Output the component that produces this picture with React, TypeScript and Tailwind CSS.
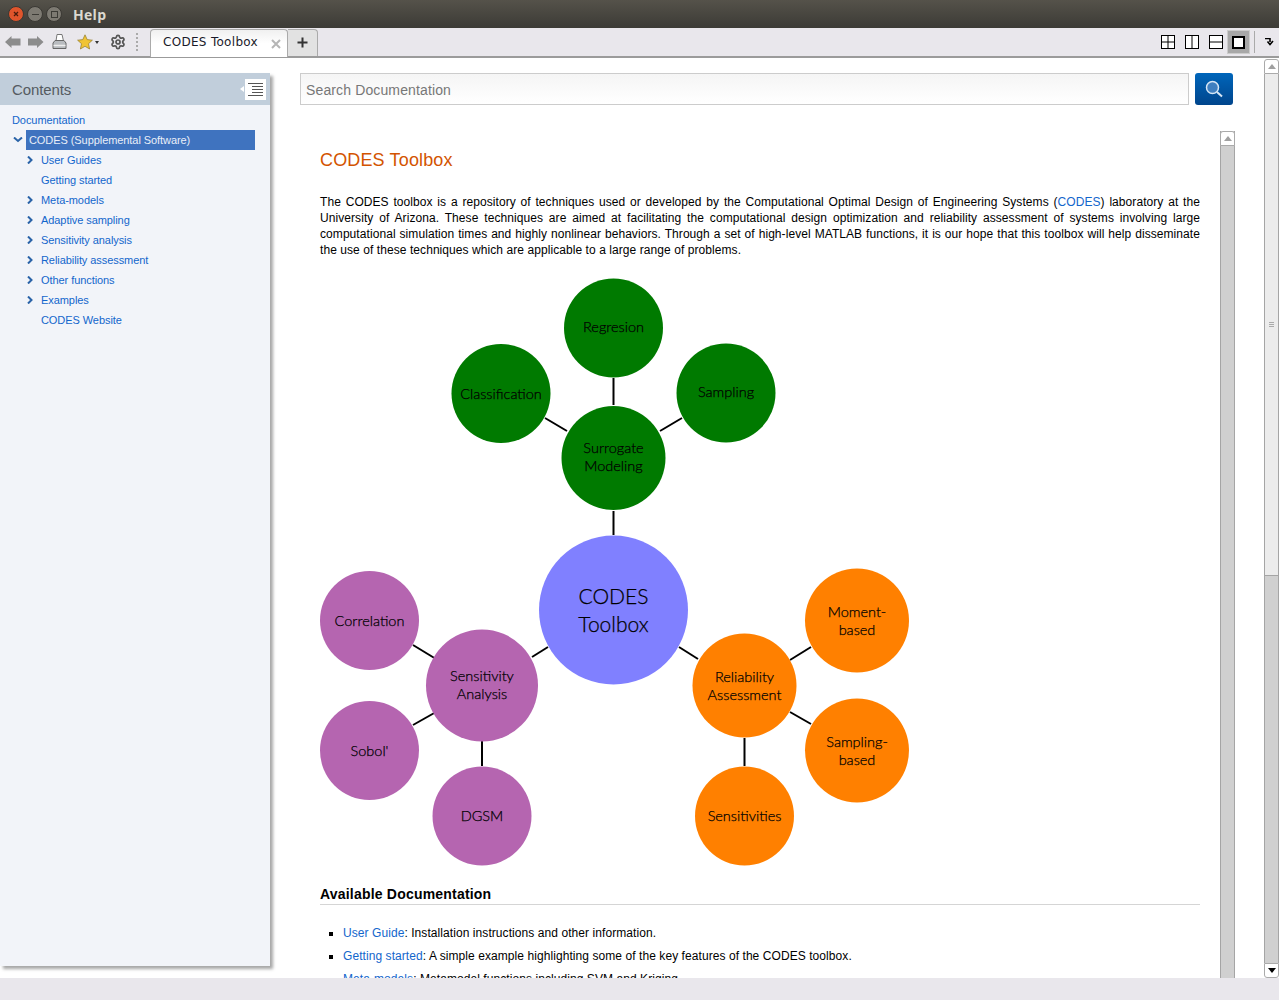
import { Settings } from "lucide-react";

const treeItems = [
  { label: "User Guides", arrow: true },
  { label: "Getting started", arrow: false },
  { label: "Meta-models", arrow: true },
  { label: "Adaptive sampling", arrow: true },
  { label: "Sensitivity analysis", arrow: true },
  { label: "Reliability assessment", arrow: true },
  { label: "Other functions", arrow: true },
  { label: "Examples", arrow: true },
  { label: "CODES Website", arrow: false },
];

const lines = [
  [613.5, 378, 613.5, 405],
  [545, 418, 567, 431],
  [660, 431, 682, 418],
  [613.5, 511, 613.5, 535],
  [532, 657, 548, 647],
  [679, 647, 698, 659],
  [413, 645, 436, 659],
  [413, 725, 436, 712],
  [482, 741, 482, 766],
  [790, 660, 811, 647],
  [790, 712, 811, 724],
  [744.5, 738, 744.5, 766],
];

const GREEN = "#007a00";
const PURPLE = "#b565b0";
const ORANGE = "#ff8000";

const nodes = [
  { x: 613.5, y: 328, r: 49.5, fill: GREEN, text: ["Regresion"], dy: -1 },
  { x: 501, y: 393.5, r: 49.5, fill: GREEN, text: ["Classification"], dy: 0 },
  { x: 726, y: 393, r: 49.5, fill: GREEN, text: ["Sampling"], dy: -1 },
  { x: 613.5, y: 458, r: 52, fill: GREEN, text: ["Surrogate", "Modeling"], dy: 0 },
  { x: 369.5, y: 620.5, r: 49.5, fill: PURPLE, text: ["Correlation"], dy: 0 },
  { x: 482, y: 685.5, r: 56, fill: PURPLE, text: ["Sensitivity", "Analysis"], dy: 0 },
  { x: 369.5, y: 750.5, r: 49.5, fill: PURPLE, text: ["Sobol'"], dy: 0 },
  { x: 482, y: 816, r: 49.5, fill: PURPLE, text: ["DGSM"], dy: 0 },
  { x: 744.5, y: 685.5, r: 52, fill: ORANGE, text: ["Reliability", "Assessment"], dy: 1 },
  { x: 857, y: 620.5, r: 52, fill: ORANGE, text: ["Moment-", "based"], dy: 1 },
  { x: 857, y: 750.5, r: 52, fill: ORANGE, text: ["Sampling-", "based"], dy: 1 },
  { x: 744.5, y: 816, r: 49.5, fill: ORANGE, text: ["Sensitivities"], dy: 0 },
];

function WindowButton({ color, children }: { color: string; children: React.ReactNode }) {
  return (
    <div className={`w-[16px] h-[16px] rounded-full border border-[#3a3833] flex items-center justify-center ${color}`}>
      {children}
    </div>
  );
}

function LayoutIcon({ children }: { children: React.ReactNode }) {
  return (
    <svg width="14" height="14" viewBox="0 0 14 14" fill="none" stroke="#000" strokeWidth="1" className="shrink-0">
      <rect x="0.5" y="0.5" width="13" height="13" fill="#fff" />
      {children}
    </svg>
  );
}

function Diagram() {
  return (
    <svg width="600" height="590" viewBox="320 278 600 590" className="block mt-[20px]" fontFamily="Lato, 'Open Sans', sans-serif" fontWeight="300">
      {lines.map((l, i) => (
        <line key={i} x1={l[0]} y1={l[1]} x2={l[2]} y2={l[3]} stroke="#000" strokeWidth="2" />
      ))}
      <circle cx="613.5" cy="610" r="74.5" fill="#8080ff" />
      <g fill="#000" stroke="#000" strokeWidth="0.25" textAnchor="middle" fontSize="21">
        <text x="613.5" y="604">CODES</text>
        <text x="613.5" y="632">Toolbox</text>
      </g>
      {nodes.map((n) => (
        <g key={n.x + "-" + n.y}>
          <circle cx={n.x} cy={n.y} r={n.r} fill={n.fill} />
          <g fill="#000" stroke="#000" strokeWidth="0.25" textAnchor="middle" fontSize="14.5">
            {n.text.length === 1 ? (
              <text x={n.x} y={n.y + 5 + n.dy}>{n.text[0]}</text>
            ) : (
              <>
                <text x={n.x} y={n.y - 5 + n.dy}>{n.text[0]}</text>
                <text x={n.x} y={n.y + 13 + n.dy}>{n.text[1]}</text>
              </>
            )}
          </g>
        </g>
      ))}
    </svg>
  );
}

function Sidebar() {
  return (
    <div className="w-[270px] h-[893px] mt-[15px] shrink-0 bg-[#f2f4f9] shadow-[3px_3px_3px_rgba(0,0,0,0.35)]">
      <div className="h-[32px] bg-[#c1cedb] flex items-center justify-between pl-[12px] pr-[4px]">
        <span className="text-[15px] tracking-[-0.1px] text-[#555b61] pt-[2px]">Contents</span>
        <div className="flex items-center gap-[1px]">
          <div className="w-0 h-0 border-y-[3px] border-y-transparent border-r-[4px] border-r-white" />
          <div className="w-[21px] h-[21px] bg-white flex flex-col items-end justify-center gap-[2px] pr-[3px]">
            <div className="w-[15px] h-[1px] bg-[#555]" />
            <div className="w-[11px] h-[1px] bg-[#555]" />
            <div className="w-[11px] h-[1px] bg-[#555]" />
            <div className="w-[11px] h-[1px] bg-[#555]" />
            <div className="w-[15px] h-[1px] bg-[#555]" />
          </div>
        </div>
      </div>
      <div className="pt-[5px] text-[11px] tracking-[-0.07px] leading-[20px] text-[#1366cc]">
        <div className="h-[20px] pl-[12px]">Documentation</div>
        <div className="h-[20px] flex items-center pl-[13px] pr-[15px]">
          <svg width="10" height="6" viewBox="0 0 10 6" className="mr-[3px]">
            <path d="M1 0.5 L5 4 L9 0.5" fill="none" stroke="#2a63a8" strokeWidth="2" />
          </svg>
          <div className="flex-1 h-[20px] bg-[#3f73bf] text-[#e8eef8] pl-[3px]">CODES (Supplemental Software)</div>
        </div>
        {treeItems.map((item) => (
          <div key={item.label} className="h-[20px] flex items-center pl-[27px]">
            <div className="w-[14px] shrink-0">
              {item.arrow && (
                <svg width="6" height="8" viewBox="0 0 6 8">
                  <path d="M1 0.5 L4.5 4 L1 7.5" fill="none" stroke="#2a63a8" strokeWidth="2" />
                </svg>
              )}
            </div>
            <span>{item.label}</span>
          </div>
        ))}
      </div>
    </div>
  );
}

export default function App() {
  return (
    <div className="w-[1279px] h-[1000px] flex flex-col overflow-hidden bg-white font-['Liberation_Sans',sans-serif]">
      {/* title bar */}
      <div className="h-[28px] shrink-0 bg-gradient-to-b from-[#55524a] to-[#3c3b36] flex items-center pl-[8px]">
        <div className="flex items-center gap-[3px]">
          <WindowButton color="bg-[#e0552c]">
            <svg width="8" height="8" viewBox="0 0 8 8"><path d="M2 2 L6 6 M6 2 L2 6" stroke="#4a1c0c" strokeWidth="1.3" /></svg>
          </WindowButton>
          <WindowButton color="bg-[#7d7a72]">
            <div className="w-[7px] h-[1px] bg-[#3c3b36]" />
          </WindowButton>
          <WindowButton color="bg-[#7d7a72]">
            <div className="w-[7px] h-[7px] border border-[#3c3b36]" />
          </WindowButton>
        </div>
        <span className="ml-[11px] text-[14px] font-bold text-[#dcd9d0] font-['Open_Sans',sans-serif] tracking-[0.3px]">Help</span>
      </div>

      {/* toolbar */}
      <div className="h-[30px] shrink-0 bg-[#e9e7ec] border-b-2 border-b-[#9b9b9b] flex items-end">
        <div className="h-[28px] w-[150px] shrink-0 flex items-center pl-[5px]">
          <svg width="16" height="14" viewBox="0 0 16 14" className="mr-[7px]">
            <path d="M0 7 L6.5 1 V3.5 H15.5 V10.5 H6.5 V13 Z" fill="#8c8c8c" />
          </svg>
          <svg width="16" height="14" viewBox="0 0 16 14" className="mr-[8px]">
            <path d="M15.5 7 L9 1 V3.5 H0 V10.5 H9 V13 Z" fill="#8c8c8c" />
          </svg>
          <svg width="15" height="16" viewBox="0 0 15 16" className="mr-[10px]">
            <path d="M5 0.5 H10 L11.5 7 H4 Z" fill="#fff" stroke="#777" strokeWidth="1" />
            <path d="M1 9 L3 6.5 H12 L14 9 V14.5 H1 Z" fill="#b9bcc0" stroke="#666" strokeWidth="1" />
            <path d="M1.5 11.5 H13.5" stroke="#eee" strokeWidth="1.5" />
          </svg>
          <svg width="16" height="16" viewBox="0 0 16 16">
            <path d="M8 0.8 L10.2 5.6 L15.4 6.2 L11.5 9.7 L12.6 15 L8 12.3 L3.4 15 L4.5 9.7 L0.6 6.2 L5.8 5.6 Z" fill="#f0c435" stroke="#8f7a2c" strokeWidth="0.7" />
          </svg>
          <div className="w-0 h-0 ml-[2px] mr-[11px] border-x-[2.5px] border-x-transparent border-t-[3px] border-t-[#333]" />
          <Settings size={16} strokeWidth={2.6} color="#555" className="mr-[10px]" />
          <div className="h-[18px] border-l-2 border-dotted border-l-[#aaa]" />
        </div>
        <div className="w-[138px] h-[28px] mb-[-1px] bg-gradient-to-b from-[#f0f0f0] via-white to-white border border-b-0 border-[#aaa] rounded-t-[4px] flex items-center pl-[12px] pr-[6px] justify-between relative">
          <span className="text-[12px] tracking-[0.3px] mb-[4px] font-['DejaVu_Sans',sans-serif] text-[#1a1a2a]">CODES Toolbox</span>
          <svg width="10" height="10" viewBox="0 0 10 10">
            <path d="M1 1 L9 9 M9 1 L1 9" stroke="#b5b5b5" strokeWidth="2" />
          </svg>
        </div>
        <div className="w-[30px] h-[27px] bg-[#e2e2e2] border border-b-0 border-l-0 border-[#aaa] rounded-tr-[4px] flex items-center justify-center pb-[2px]">
          <svg width="11" height="11" viewBox="0 0 11 11"><path d="M5.5 0.5 V10.5 M0.5 5.5 H10.5" stroke="#333" strokeWidth="2" /></svg>
        </div>
        <div className="flex-1 h-[28px] flex items-center justify-end">
          <LayoutIcon><path d="M7 0.5 V13.5 M0.5 7 H13.5" /></LayoutIcon>
          <div className="w-[10px]" />
          <LayoutIcon><path d="M7 0.5 V13.5" /></LayoutIcon>
          <div className="w-[10px]" />
          <LayoutIcon><path d="M0.5 7 H13.5" /></LayoutIcon>
          <div className="w-[23px] h-[24px] ml-[4px] bg-[#a8a8a8] border border-[#ccc] flex items-center justify-center">
            <div className="w-[13px] h-[13px] bg-white border-2 border-black" />
          </div>
          <div className="h-[22px] ml-[4px] border-l border-l-[#aaa]" />
          <svg width="9" height="8" viewBox="0 0 9 8" className="ml-[10px] mr-[5px]">
            <path d="M0 0.5 H5 V4 M2.5 3.5 L5 6.5 L8 3" fill="none" stroke="#000" strokeWidth="1.6" />
          </svg>
        </div>
      </div>

      {/* body */}
      <div className="h-[920px] shrink-0 flex">
        <Sidebar />
        <div className="flex-1 min-w-0 flex flex-col pl-[30px] pt-[15px]">
          <div className="flex gap-[6px] h-[32px] shrink-0">
            <div className="w-[889px] h-[32px] border border-[#ccc] bg-gradient-to-b from-[#f5f5f5] to-white flex items-center pl-[5px] pt-[2px] text-[14px] tracking-[0.13px] text-[#777]">
              Search Documentation
            </div>
            <div className="w-[38px] h-[32px] rounded-[3px] bg-gradient-to-b from-[#0066bb] to-[#00458c] flex items-center justify-center">
              <svg width="18" height="18" viewBox="0 0 18 18">
                <circle cx="7.5" cy="7.5" r="6" fill="#3f7fc0" stroke="#d6e6f5" strokeWidth="1.5" />
                <path d="M12 12 L17 16.5" stroke="#d6e6f5" strokeWidth="2" />
              </svg>
            </div>
          </div>
          <div className="mt-[26px] flex-1 min-h-0 flex">
            <div className="w-[920px] shrink-0 pl-[20px] pt-[19px] overflow-hidden">
              <div className="w-[880px]">
                <h1 className="text-[18px] leading-[20px] tracking-[0.15px] text-[#d35400]">CODES Toolbox</h1>
                <p className="mt-[24px] text-[12px] leading-[16px] tracking-[0.07px] text-black text-justify">
                  The CODES toolbox is a repository of techniques used or developed by the Computational Optimal Design of Engineering Systems (<span className="text-[#1366cc]">CODES</span>) laboratory at the University of Arizona. These techniques are aimed at facilitating the computational design optimization and reliability assessment of systems involving large computational simulation times and highly nonlinear behaviors. Through a set of high-level MATLAB functions, it is our hope that this toolbox will help disseminate the use of these techniques which are applicable to a large range of problems.
                </p>
                <Diagram />
                <h2 className="mt-[17px] text-[14px] leading-[18px] tracking-[0.2px] font-bold text-black border-b border-b-[#d5d5d5] pb-[1px]">Available Documentation</h2>
                <ul className="mt-[20px] pl-[23px] list-[square] text-[12px] leading-[16px] tracking-[0.07px] text-black flex flex-col gap-[7px]">
                  <li><span className="text-[#1366cc]">User Guide</span>: Installation instructions and other information.</li>
                  <li><span className="text-[#1366cc]">Getting started</span>: A simple example highlighting some of the key features of the CODES toolbox.</li>
                  <li><span className="text-[#1366cc]">Meta-models</span>: Metamodel functions including SVM and Kriging.</li>
                </ul>
              </div>
            </div>
            {/* inner scrollbar */}
            <div className="w-[15px] shrink-0 flex flex-col border-x border-x-[#a5a5a5] bg-[#d0d0d0]">
              <div className="h-[15px] shrink-0 mx-[-1px] bg-white border border-[#aaa] rounded-t-[3px] flex items-center justify-center">
                <div className="w-0 h-0 border-x-[4px] border-x-transparent border-b-[5px] border-b-[#a0a0a0]" />
              </div>
            </div>
          </div>
        </div>
        {/* outer scrollbar */}
        <div className="w-[15px] shrink-0 flex flex-col">
          <div className="h-[15px] shrink-0 mt-[1px] bg-white border border-[#aaa] rounded-t-[3px] flex items-center justify-center">
            <div className="w-0 h-0 border-x-[4px] border-x-transparent border-b-[5px] border-b-[#a0a0a0]" />
          </div>
          <div className="h-[502px] shrink-0 bg-[#ececec] border-x border-b border-[#a5a5a5] flex flex-col items-center justify-center gap-[1px]">
            <div className="w-[5px] h-[1px] bg-[#aaa]" />
            <div className="w-[5px] h-[1px] bg-[#aaa]" />
            <div className="w-[5px] h-[1px] bg-[#aaa]" />
          </div>
          <div className="flex-1 bg-[#d0d0d0] border-x border-x-[#a5a5a5]" />
          <div className="h-[15px] shrink-0 bg-white border border-[#aaa] rounded-b-[3px] flex items-center justify-center">
            <div className="w-0 h-0 border-x-[4px] border-x-transparent border-t-[5px] border-t-black" />
          </div>
        </div>
      </div>

      {/* status bar */}
      <div className="flex-1 bg-[#e9e7ec]" />
    </div>
  );
}
